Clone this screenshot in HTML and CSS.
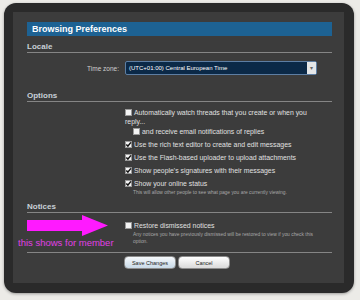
FILE: index.html
```html
<!DOCTYPE html>
<html lang="en">
<head>
    <meta charset="UTF-8">
    <title>Browsing Preferences</title>
    <link rel="stylesheet" href="styles.css">
</head>
<body>

<div class="frame">
<div class="panel">

    <div class="title">Browsing Preferences</div>

    <div class="heading">Locale</div>
    <div class="row tz-row">
        <div class="label">Time zone:</div>
        <div class="select">
            <span class="select-text">(UTC+01:00) Central European Time</span>
            <span class="select-arrow">&#9662;</span>
        </div>
    </div>

    <div class="heading options-heading">Options</div>
    <div class="row">
        <div class="label"></div>
        <ul class="checks">
            <li>
                <span class="box"></span>Automatically watch threads that you create or when you reply...
                <div class="sub"><span class="box"></span>and receive email notifications of replies</div>
            </li>
            <li><span class="box checked"><svg viewBox="0 0 7 7"><path d="M1.3 3.4 L2.9 5.1 L5.9 1.4"/></svg></span>Use the rich text editor to create and edit messages</li>
            <li><span class="box checked"><svg viewBox="0 0 7 7"><path d="M1.3 3.4 L2.9 5.1 L5.9 1.4"/></svg></span>Use the Flash-based uploader to upload attachments</li>
            <li><span class="box checked"><svg viewBox="0 0 7 7"><path d="M1.3 3.4 L2.9 5.1 L5.9 1.4"/></svg></span>Show people's signatures with their messages</li>
            <li>
                <span class="box checked"><svg viewBox="0 0 7 7"><path d="M1.3 3.4 L2.9 5.1 L5.9 1.4"/></svg></span>Show your online status
                <div class="hint">This will allow other people to see what page you are currently viewing.</div>
            </li>
        </ul>
    </div>

    <div class="heading notices-heading">Notices</div>
    <div class="row">
        <div class="label"></div>
        <ul class="checks notices">
            <li>
                <span class="box"></span>Restore dismissed notices
                <div class="hint">Any notices you have previously dismissed will be restored to view if you check this option.</div>
            </li>
        </ul>
    </div>

    <div class="buttons">
        <button class="btn primary">Save Changes</button>
        <button class="btn">Cancel</button>
    </div>

    <!-- annotation drawn over the form -->
    <svg class="arrow" width="82" height="21" viewBox="0 0 82 21">
        <polygon points="0,5 55,5 55,0 81,10.5 55,21 55,16 0,16"/>
    </svg>
    <div class="note">this shows for member</div>

</div>
</div>

</body>
</html>
```

FILE: styles.css
```css
body {
    margin: 0;
    height: 300px;
    background-color: #ecebe7;
    font-family: "Liberation Sans", Arial, sans-serif;
    color: #e0e0e0;
}
.frame {
    margin: 3px 6px 0 4px;
    height: 290px;
    box-sizing: border-box;
    padding: 9px 10px 10px 9px;
    background-color: #2a2a2a;
    border-radius: 12px;
    box-shadow: 0 1px 3px rgba(0,0,0,0.35);
}
.panel {
    position: relative;
    height: 100%;
    box-sizing: border-box;
    padding: 10px 12px 0 14px;
    background-color: #3c3c3c;
}
.title {
    height: 14px;
    line-height: 14px;
    padding-left: 5px;
    background-color: #1d6293;
    color: #ffffff;
    font-size: 9px;
    font-weight: bold;
}
.heading {
    margin-top: 6px;
    line-height: 10px;
    font-size: 8px;
    font-weight: bold;
    color: #c8d0d8;
    border-bottom: 1px solid #858585;
}
.options-heading {
    margin-top: 16px;
}
.notices-heading {
    margin-top: 6px;
}
.row {
    display: grid;
    grid-template-columns: 98px 1fr;
}
.tz-row {
    margin-top: 8px;
    align-items: center;
}
.label {
    text-align: right;
    padding-right: 6px;
    font-size: 6.5px;
    color: #cfcfcf;
}
.select {
    display: flex;
    align-items: center;
    width: 192px;
    height: 14px;
    box-sizing: border-box;
    background-color: #0b2947;
    border: 1px solid #5d7ea3;
    border-radius: 2px;
}
.select-text {
    flex: 1;
    padding-left: 3px;
    font-size: 6px;
    color: #ffffff;
}
.select-arrow {
    width: 9px;
    height: 12px;
    line-height: 12px;
    text-align: center;
    background-color: #e4e6e8;
    color: #666;
    font-size: 6px;
}
.checks {
    list-style: none;
    margin: 6px 0 0 0;
    padding: 0 14px 0 0;
    font-size: 6.9px;
    line-height: 9px;
}
.checks li {
    margin-bottom: 4px;
}
.checks li:last-child {
    margin-bottom: 0;
}
.box {
    display: inline-block;
    vertical-align: -1px;
    width: 7px;
    height: 7px;
    margin-right: 2px;
    box-sizing: border-box;
    background-color: #f4f4f4;
    border: 1px solid #9a9a9a;
}
.box svg {
    display: block;
    width: 7px;
    height: 7px;
    margin: -1px;
}
.box path {
    fill: none;
    stroke: #111;
    stroke-width: 1.5;
}
.sub {
    margin-top: 1px;
    padding-left: 8px;
}
.hint {
    margin-top: 1px;
    padding-left: 8px;
    font-size: 4.9px;
    line-height: 7px;
    color: #a8a8a8;
}
.notices {
    margin-top: 8px;
    padding-bottom: 7px;
}
.buttons {
    display: flex;
    gap: 2px;
    padding: 3px 0 0 97px;
    border-top: 1px solid #858585;
}
.btn {
    width: 52px;
    height: 13px;
    padding: 0;
    font-family: "Liberation Sans", Arial, sans-serif;
    font-size: 5.5px;
    color: #222;
    background: linear-gradient(#ffffff, #dadada);
    border: 1px solid #8c8c8c;
    border-radius: 4px;
}
.btn.primary {
    background: linear-gradient(#f6f9fc, #c9dae8);
}
.arrow {
    position: absolute;
    left: 14px;
    top: 203px;
    fill: #ff1aff;
}
.note {
    position: absolute;
    left: 5px;
    top: 226px;
    font-size: 9.5px;
    line-height: 10px;
    color: #e040e4;
}
```
